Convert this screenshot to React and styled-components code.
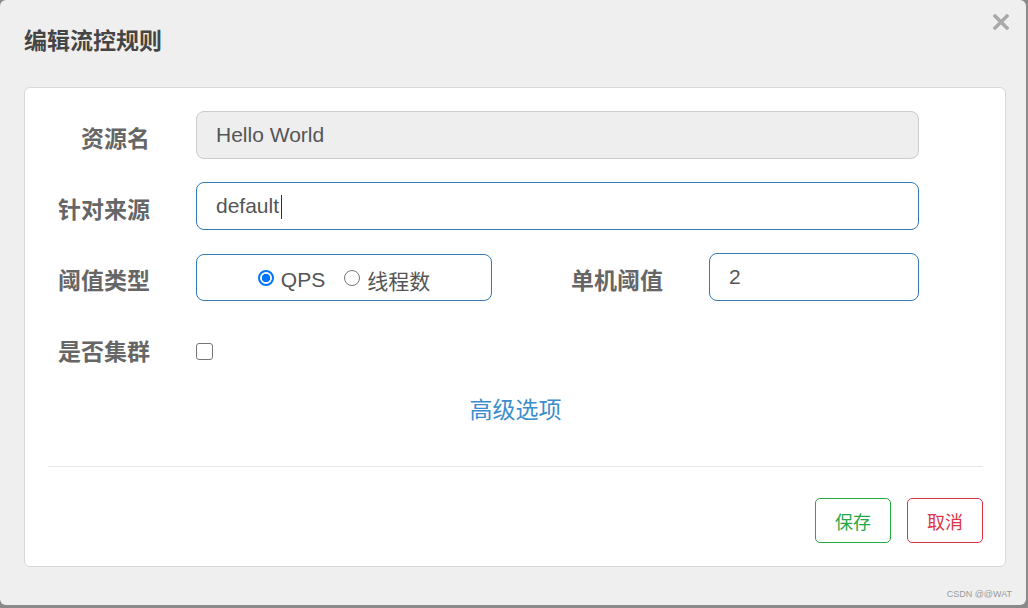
import React, { useState } from 'react';
import styled, { createGlobalStyle } from 'styled-components';

const GlobalStyle = createGlobalStyle`
    html, body {
        margin: 0;
        padding: 0;
        background: #8a8a8a;
        font-family: "Liberation Sans", "Noto Sans CJK SC", sans-serif;
    }
    * { box-sizing: border-box; }
`;

const App = () => {
    const [grade, setGrade] = useState('qps');
    const [cluster, setCluster] = useState(false);
    const [source, setSource] = useState('default');
    const [count, setCount] = useState('2');

    return (
        <React.Fragment>
            <GlobalStyle />
            <Dialog>
                <Header>
                    <Title>编辑流控规则</Title>
                    <CloseButton aria-label="close">
                        <svg width="16" height="16" viewBox="0 0 16 16">
                            <path d="M2 2 L14 14 M14 2 L2 14" stroke="#a9a9a9" strokeWidth="3.4" strokeLinecap="square" />
                        </svg>
                    </CloseButton>
                </Header>
                <Card>
                    <Form>
                        <Row>
                            <Label>资源名</Label>
                            <TextInput value="Hello World" disabled readOnly width="723px" />
                        </Row>
                        <Row>
                            <Label>针对来源</Label>
                            <TextInput value={source} onChange={(e) => setSource(e.target.value)} width="723px" />
                            <Caret />
                        </Row>
                        <Row>
                            <Label>阈值类型</Label>
                            <RadioBox>
                                <RadioItem>
                                    <Radio type="radio" name="grade" checked={grade === 'qps'} onChange={() => setGrade('qps')} />
                                    QPS
                                </RadioItem>
                                <RadioItem>
                                    <Radio type="radio" name="grade" checked={grade === 'thread'} onChange={() => setGrade('thread')} />
                                    线程数
                                </RadioItem>
                            </RadioBox>
                            <Label width="125px">单机阈值</Label>
                            <TextInput value={count} onChange={(e) => setCount(e.target.value)} width="210px" />
                        </Row>
                        <Row>
                            <Label>是否集群</Label>
                            <Check type="checkbox" checked={cluster} onChange={() => setCluster(!cluster)} />
                        </Row>
                        <AdvancedLink>高级选项</AdvancedLink>
                    </Form>
                    <Divider />
                    <Footer>
                        <OutlineButton color="#28a745">保存</OutlineButton>
                        <OutlineButton color="#dc3545">取消</OutlineButton>
                    </Footer>
                </Card>
                <Watermark>CSDN @@WAT</Watermark>
            </Dialog>
        </React.Fragment>
    );
};

const Dialog = styled.div`
    position: relative;
    width: 1026px;
    height: 605px;
    background: #efefef;
    border-radius: 6px;
    display: flex;
    flex-direction: column;
    padding: 0 20px 0 24px;
`;

const Header = styled.div`
    height: 87px;
    display: flex;
    align-items: flex-start;
`;

const Title = styled.h3`
    margin: 24px 0 0;
    font-family: "Noto Sans CJK SC", sans-serif;
    font-size: 23px;
    font-weight: 700;
    line-height: 30px;
    color: #454545;
`;

const CloseButton = styled.button`
    position: absolute;
    top: 14px;
    right: 17px;
    width: 16px;
    height: 16px;
    padding: 0;
    border: none;
    background: none;
    display: flex;
`;

const Card = styled.div`
    background: #fff;
    border: 1px solid #d9d9d9;
    border-radius: 6px;
    height: 480px;
    padding: 23px 22px 23px 23px;
    display: flex;
    flex-direction: column;
`;

const Form = styled.div`
    display: flex;
    flex-direction: column;
    gap: 23px;
`;

const Row = styled.div`
    position: relative;
    display: flex;
    align-items: center;
    height: 48px;
    gap: 46px;
`;

const Label = styled.label`
    width: ${(p) => p.width || '102px'};
    flex-shrink: 0;
    text-align: right;
    font-family: "Noto Sans CJK SC", sans-serif;
    font-size: 23px;
    font-weight: 700;
    color: #666;
    padding-top: 4px;
    white-space: nowrap;
`;

const TextInput = styled.input`
    width: ${(p) => p.width};
    height: 48px;
    padding: 0 19px;
    border: 1px solid #337ab7;
    border-radius: 8px;
    font-family: "Liberation Sans", "Noto Sans CJK SC", sans-serif;
    font-size: 21px;
    color: #555;
    background: #fff;
    outline: none;
    &:disabled {
        background: #eee;
        border-color: #ccc;
        color: #555;
    }
`;

const Caret = styled.span`
    position: absolute;
    left: 233px;
    top: 13px;
    width: 1px;
    height: 24px;
    background: #333;
`;

const RadioBox = styled.div`
    width: 296px;
    height: 47px;
    flex-shrink: 0;
    border: 1px solid #337ab7;
    border-radius: 8px;
    display: flex;
    align-items: center;
    justify-content: center;
    gap: 19px;
    padding: 6px 0 0 0;
`;

const RadioItem = styled.label`
    display: flex;
    align-items: center;
    gap: 7px;
    font-family: "Liberation Sans", "Noto Sans CJK SC", sans-serif;
    font-size: 21px;
    color: #555;
`;

const Radio = styled.input`
    appearance: none;
    width: 16px;
    height: 16px;
    margin: 0 0 4px;
    border-radius: 50%;
    border: 1.5px solid #767676;
    background: #fff;
    flex-shrink: 0;
    &:checked {
        border: 2px solid #0075ff;
        background: radial-gradient(circle, #0075ff 0 4px, #fff 4.5px);
    }
`;

const Check = styled.input`
    appearance: none;
    width: 17px;
    height: 17px;
    margin: 6px 0 0;
    border: 1.5px solid #767676;
    border-radius: 3px;
    background: #fff;
`;

const AdvancedLink = styled.a`
    align-self: center;
    margin: -2px 0 0;
    font-family: "Noto Sans CJK SC", sans-serif;
    font-size: 23px;
    color: #3c8dcb;
    cursor: pointer;
    line-height: 30px;
`;

const Divider = styled.hr`
    width: 100%;
    margin: 43px 0 0;
    border: none;
    border-top: 1px solid #e5e5e5;
`;

const Footer = styled.div`
    display: flex;
    justify-content: flex-end;
    gap: 16px;
    margin-top: 31px;
`;

const OutlineButton = styled.button`
    width: 76px;
    height: 45px;
    background: #fff;
    border: 1px solid ${(p) => p.color};
    border-radius: 5px;
    color: ${(p) => p.color};
    font-family: "Noto Sans CJK SC", sans-serif;
    font-size: 18px;
`;

const Watermark = styled.span`
    position: absolute;
    right: 14px;
    bottom: 6px;
    font-family: "Liberation Sans", sans-serif;
    font-size: 9px;
    color: #9a9a9a;
`;

export default App;
